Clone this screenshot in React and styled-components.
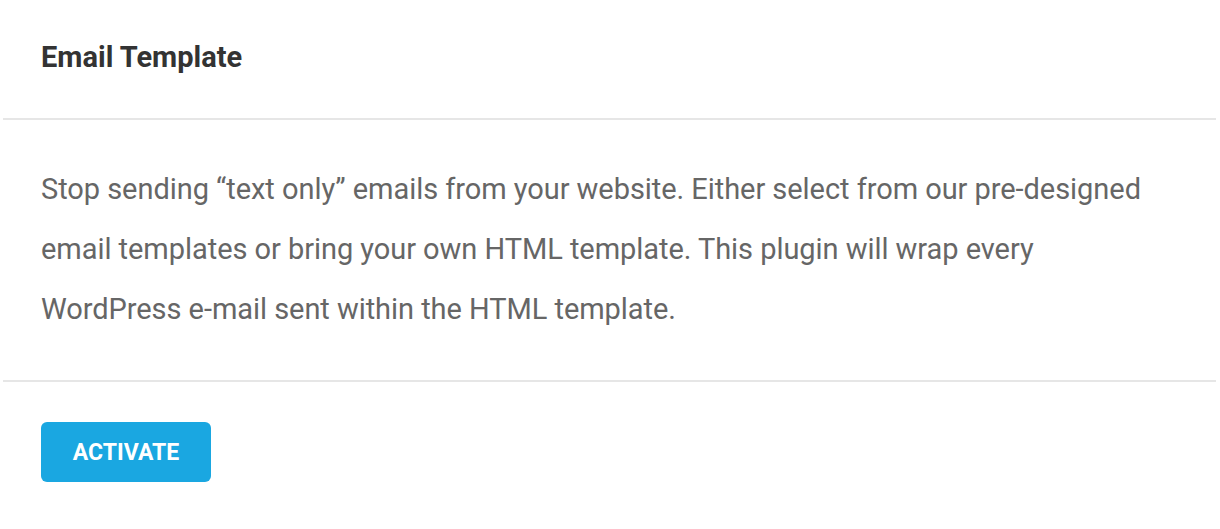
import React from "react";
import styled, { createGlobalStyle } from "styled-components";

const Global = createGlobalStyle`
  html, body { margin: 0; padding: 0; background: #fff; }
  body { font-family: Roboto, "Liberation Sans", Arial, sans-serif; }
`;

const Card = styled.div`
  width: 1213px;
  margin: 0 4px 0 3px;
  background: #fff;
`;

const Header = styled.div`
  display: flex;
  align-items: center;
  box-sizing: border-box;
  height: 120px;
  padding: 0 38px 4px;
  border-bottom: 2px solid #e6e6e6;
`;

const Title = styled.h2`
  margin: 0;
  font-size: 29px;
  font-weight: 700;
  color: #333;
`;

const Body = styled.div`
  padding: 39px 38px 41px;
  border-bottom: 2px solid #e6e6e6;
`;

const Text = styled.p`
  margin: 0;
  font-size: 29px;
  line-height: 60px;
  letter-spacing: -0.05px;
  color: #666;
  max-width: 1110px;
`;

const Footer = styled.div`
  padding: 40px 38px;
`;

const Button = styled.button`
  width: 170px;
  height: 60px;
  border: none;
  border-radius: 6px;
  background: #1aa7e1;
  color: #fff;
  font-family: inherit;
  font-size: 23px;
  font-weight: 700;
  text-transform: uppercase;
  cursor: pointer;
`;

export default function App() {
  return (
    <>
      <Global />
      <Card>
        <Header>
          <Title>Email Template</Title>
        </Header>
        <Body>
          <Text>
            Stop sending “text only” emails from your website. Either select from our pre-designed
            email templates or bring your own HTML template. This plugin will wrap every
            WordPress e-mail sent within the HTML template.
          </Text>
        </Body>
        <Footer>
          <Button>Activate</Button>
        </Footer>
      </Card>
    </>
  );
}
